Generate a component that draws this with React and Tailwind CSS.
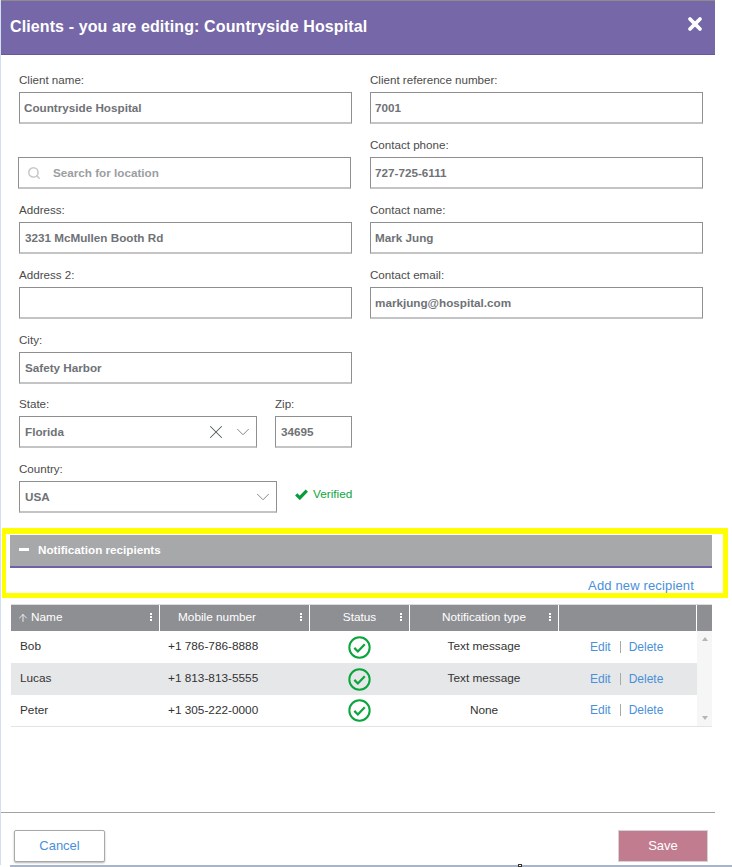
import React from "react";
import { ChevronDown, Search, X, ArrowUp } from "lucide-react";

const Label = ({ children }) => (
  <div className="h-4 mb-1 text-[11.6px] leading-4 text-[#4b4b4b]">{children}</div>
);

const Box = ({ children, className = "" }) => (
  <div className={`h-8 flex items-center border border-[#8f8f8f] border-b-2 border-b-[#c4c4c4] bg-white pt-px text-[11.7px] font-bold text-[#6f7276] ${className}`}>
    {children}
  </div>
);

const Field = ({ label, value, pad = "pl-[5px]" }) => (
  <div>
    <Label>{label}</Label>
    <Box className={pad}>{value}</Box>
  </div>
);

const Dots = () => (
  <span className="absolute right-[7px] top-[8px] flex flex-col gap-px">
    <i className="block h-[2px] w-[2px] bg-white" />
    <i className="block h-[2px] w-[2px] bg-white" />
    <i className="block h-[2px] w-[2px] bg-white" />
  </span>
);

const HeadCell = ({ children, className = "justify-center", dots = true }) => (
  <div className={`relative flex items-center bg-[#8e8f93] text-[11.8px] text-white ${className}`}>
    {children}
    {dots && <Dots />}
  </div>
);

const StatusIcon = () => (
  <svg width="23" height="23" viewBox="0 0 24 24" fill="none" stroke="#0aa53c" strokeWidth="2.1">
    <circle cx="12" cy="12" r="10.6" />
    <path d="M6.6 12.4l3.7 3.7 7.2-7.6" strokeWidth="2.3" />
  </svg>
);

const rows = [
  ["Bob", "+1 786-786-8888", "Text message", "h-[32px] bg-white"],
  ["Lucas", "+1 813-813-5555", "Text message", "h-[32px] bg-[#e6e7e9]"],
  ["Peter", "+1 305-222-0000", "None", "h-[31px] bg-white"],
];

const columns = "grid grid-cols-[148px_149px_99px_148px_137px]";

export default function App() {
  return (
    <div className="relative h-[867px] w-[732px] overflow-hidden bg-white font-['Liberation_Sans',Arial,sans-serif]">
      <div className="flex h-[865px] w-[715px] flex-col border-l border-l-[#d3e0f0]">
        <header className="flex h-[55px] shrink-0 items-center justify-between border-t border-b border-t-[#8c8c8c] border-b-[#6a57a0] bg-[#7668a8] pl-[9px] pr-[10px] text-white">
          <h1 className="mb-[2px] text-base font-bold tracking-[0.11px]">Clients - you are editing: Countryside Hospital</h1>
          <X size={20} strokeWidth={4.5} className="mb-[8px]" />
        </header>

        <div className="flex gap-[18px] pl-[18px] pt-[17px]">
          <div className="flex w-[333px] flex-col gap-[13px]">
            <Field label="Client name:" value="Countryside Hospital" pad="pl-[4px]" />
            <div className="-ml-px w-[333px] pt-5">
              <Box className="pl-[8px] text-[#9b9ea2]">
                <Search size={14} className="mr-[12px] text-[#c8c8c8]" strokeWidth={2.6} />
                Search for location
              </Box>
            </div>
            <Field label="Address:" value="3231 McMullen Booth Rd" />
            <Field label="Address 2:" value="" />
            <Field label="City:" value="Safety Harbor" />
            <div className="-mt-px flex gap-[18px]">
              <div className="w-[238px] shrink-0">
                <Label>State:</Label>
                <Box className="justify-between border-b border-b-[#8f8f8f] pl-[5px] pr-[2px]">
                  Florida
                  <span className="flex items-center gap-[5px]">
                    <X size={22} strokeWidth={1.1} className="text-[#4f5f5f]" />
                    <ChevronDown size={22} strokeWidth={1} className="text-[#7a7d80]" />
                  </span>
                </Box>
              </div>
              <div className="w-[77px] shrink-0">
                <Label>Zip:</Label>
                <Box className="border-b border-b-[#8f8f8f] pl-[5px]">34695</Box>
              </div>
            </div>
            <div className="flex gap-[18px]">
              <div className="w-[258px] shrink-0">
                <Label>Country:</Label>
                <Box className="justify-between border-b border-b-[#8f8f8f] pl-[5px] pr-[2px]">
                  USA
                  <ChevronDown size={22} strokeWidth={1} className="text-[#7a7d80]" />
                </Box>
              </div>
              <div className="mt-[26px] flex h-4 shrink-0 items-center gap-[5px] text-[11.8px] text-[#0aa53c]">
                <svg width="13" height="11" viewBox="0 0 13 11" fill="none" stroke="#0a9b3a" strokeWidth="3.2" className="-mt-px">
                  <path d="M1.2 5.4l3.6 3.5 7-7.2" />
                </svg>
                Verified
              </div>
            </div>
          </div>
          <div className="flex w-[333px] flex-col gap-[13px]">
            <Field label="Client reference number:" value="7001" pad="pl-[4px]" />
            <Field label="Contact phone:" value="727-725-6111" pad="pl-[4px]" />
            <Field label="Contact name:" value="Mark Jung" pad="pl-[4px]" />
            <Field label="Contact email:" value="markjung@hospital.com" pad="pl-[4px]" />
          </div>
        </div>

        <section className="ml-px mt-[15px] w-[726px] border-[5px] border-t-[6px] border-l-4 border-[#ffff00] pl-[4px] pr-[11px] pt-px">
          <div className="flex h-[33px] items-center gap-[9px] border-b-2 border-b-[#6f60a8] bg-[#a7a8aa] pb-[2px] pl-[9px] text-[11.7px] font-bold text-white">
            <span className="h-[3px] w-[10px] bg-white" />
            Notification recipients
          </div>
          <div className="flex h-[25px] items-end justify-end pr-[18px] text-[13px] leading-4 tracking-[0.15px] text-[#4a90d9]">
            <span className="-mb-px">Add new recipient</span>
          </div>
        </section>

        <div className="ml-[10px] mt-[6px] w-[701px] text-[11.8px] text-[#333]">
          <div className="flex h-[27px] gap-px border-t border-t-[#dddddd]">
            <div className={`${columns} flex-1 gap-px`}>
              <HeadCell className="justify-start pl-[6px]">
                <ArrowUp size={12} strokeWidth={1.6} className="mr-[2px]" />
                Name
              </HeadCell>
              <HeadCell className="justify-start pl-[18px]">Mobile number</HeadCell>
              <HeadCell>Status</HeadCell>
              <HeadCell>Notification type</HeadCell>
              <HeadCell dots={false} />
            </div>
            <div className="w-[15px] bg-[#8e8f93]" />
          </div>
          <div className="flex border-b border-b-[#e4e4e4]">
            <div className="w-[686px]">
              {rows.map(([name, phone, type, rowStyle]) => (
                <div key={name} className={`${columns} items-center gap-px ${rowStyle}`}>
                  <span className="pl-[9px]">{name}</span>
                  <span className="pl-[8px]">{phone}</span>
                  <span className="flex justify-center"><StatusIcon /></span>
                  <span className="text-center">{type}</span>
                  <span className="flex items-center pb-px pl-[31px] text-xs text-[#4a90d9]">
                    Edit
                    <i className="ml-[9px] mr-[8px] h-3 w-px bg-[#a9a9a9]" />
                    Delete
                  </span>
                </div>
              ))}
            </div>
            <div className="flex w-[15px] flex-col items-center justify-between bg-[#f6f6f6] py-[6px]">
              <span className="h-0 w-0 border-x-[3px] border-b-[4px] border-x-transparent border-b-[#b5b5b5]" />
              <span className="h-0 w-0 border-x-[3px] border-t-[4px] border-x-transparent border-t-[#b5b5b5]" />
            </div>
          </div>
        </div>

        <div className="flex-1" />
        <footer className="flex h-[53px] shrink-0 items-start justify-between border-t border-t-[#a3a3a3] pl-[13px] pr-[7px] pt-[17px] text-[13px]">
          <button className="h-[32px] w-[91px] rounded-[2px] border border-[#a9a9a9] bg-white text-[#4a90d9] shadow-[0_1px_2px_rgba(0,0,0,0.3)]">Cancel</button>
          <button className="h-[32px] w-[90px] border border-[#d3d3d3] bg-[#c27c8f] text-white">Save</button>
        </footer>
      </div>
      <div className="ml-[10px] h-[2px] bg-[#a9b4c9]" />
      <span className="absolute bottom-0 left-[518px] h-[3px] w-[4px] border border-[#333] bg-white" />
    </div>
  );
}
